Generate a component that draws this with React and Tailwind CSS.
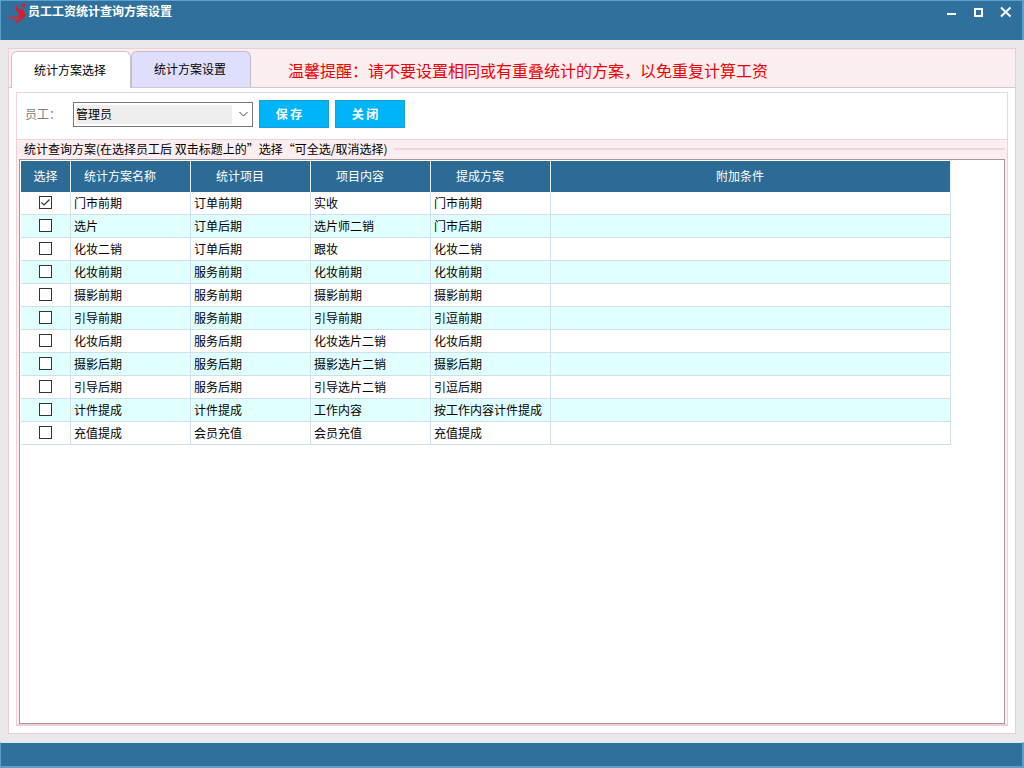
import { useState } from "react";

const EMPLOYEES = ["管理员"];

const PLANS = [
  { name: "门市前期", item: "订单前期", content: "实收", commission: "门市前期" },
  { name: "选片", item: "订单后期", content: "选片师二销", commission: "门市后期" },
  { name: "化妆二销", item: "订单后期", content: "跟妆", commission: "化妆二销" },
  { name: "化妆前期", item: "服务前期", content: "化妆前期", commission: "化妆前期" },
  { name: "摄影前期", item: "服务前期", content: "摄影前期", commission: "摄影前期" },
  { name: "引导前期", item: "服务前期", content: "引导前期", commission: "引逗前期" },
  { name: "化妆后期", item: "服务后期", content: "化妆选片二销", commission: "化妆后期" },
  { name: "摄影后期", item: "服务后期", content: "摄影选片二销", commission: "摄影后期" },
  { name: "引导后期", item: "服务后期", content: "引导选片二销", commission: "引逗后期" },
  { name: "计件提成", item: "计件提成", content: "工作内容", commission: "按工作内容计件提成" },
  { name: "充值提成", item: "会员充值", content: "会员充值", commission: "充值提成" },
];

const HEADERS = ["统计方案名称", "统计项目", "项目内容", "提成方案", "附加条件"];

const Logo = () => (
  <svg width="24" height="24" viewBox="0 0 24 24" fill="none" aria-hidden="true">
    <circle cx="19.5" cy="4.5" r="1.900" fill="#d5202c" />
    <path
      d="M12.500 5.500c-.3 2.500 1 4 3.500 4.500 3 .6 5 1.500 4.500 4-.4 2.200-3.500 4-8.500 7.500"
      stroke="#d5202c"
      strokeWidth="2"
      strokeLinecap="round"
    />
    <path d="M14 9l4-1.500 1.500 3 .5 5.500-4 1-1.500-3z" fill="#d5202c" />
    <path d="M1.500 15.500l6 .2 7.500-.7 2 2-3 2-7-1z" fill="#a83c50" />
  </svg>
);

const WindowButtons = () => (
  <div className="flex items-start gap-3 pt-1 pr-2 text-white">
    <button type="button" aria-label="最小化" className="h-4 w-4">
      <svg width="16" height="16" viewBox="0 0 16 16">
        <path d="M5 9h9" stroke="currentColor" strokeWidth="2" />
      </svg>
    </button>
    <button type="button" aria-label="最大化" className="h-4 w-4">
      <svg width="16" height="16" viewBox="0 0 16 16" fill="none">
        <path d="M5 4h7v7H5z" stroke="currentColor" strokeWidth="2" />
      </svg>
    </button>
    <button type="button" aria-label="关闭窗口" className="h-4 w-4">
      <svg width="16" height="16" viewBox="0 0 16 16">
        <path d="M3 2.500l9.500 9M12.500 2.500l-9.500 9" stroke="currentColor" strokeWidth="2" />
      </svg>
    </button>
  </div>
);

const CheckBox = ({ label, checked, onChange }) => (
  <span className="grid">
    <input
      type="checkbox"
      aria-label={label}
      checked={checked}
      onChange={onChange}
      className="col-start-1 row-start-1 h-[13px] w-[13px] appearance-none border border-[#333333] bg-white"
    />
    {checked && (
      <svg
        className="pointer-events-none col-start-1 row-start-1"
        width="13"
        height="13"
        viewBox="0 0 13 13"
        fill="none"
      >
        <path d="M2.500 6.500l2.500 2.500 5.500-5.500" stroke="#333333" strokeWidth="1.200" />
      </svg>
    )}
  </span>
);

const Tab = ({ active, onClick, children }) => (
  <button
    type="button"
    role="tab"
    aria-selected={active}
    onClick={onClick}
    className={
      active
        ? "h-[37px] w-[120px] rounded-t-md border border-b-0 border-[#c9c3c9] bg-white pr-0.5"
        : "h-9 w-[120px] rounded-t-md border border-b-0 border-[#c0bccb] bg-[#dfdffd] pr-0.5 pb-0.5"
    }
  >
    {children}
  </button>
);

export default function App() {
  const [tab, setTab] = useState(0);
  const [employee, setEmployee] = useState(EMPLOYEES[0]);
  const [selected, setSelected] = useState(PLANS.map((_, i) => i === 0));

  const toggle = (index) =>
    setSelected(selected.map((s, i) => (i === index ? !s : s)));

  // Double click on the header selects everything, or clears it
  const toggleAll = () => {
    const all = selected.every(Boolean);
    setSelected(selected.map(() => !all));
  };

  return (
    <div className="flex min-h-screen flex-col bg-[#e9e9e9] font-['Noto_Sans_CJK_SC','Liberation_Sans',sans-serif] text-xs text-black">
      {/* Title bar */}
      <header className="flex h-10 items-start justify-between border-t border-r-2 border-l border-t-[#5a9fcd] border-r-[#5a9fcd] border-l-[#5a9fcd] bg-[#2f719c]">
        <div className="flex items-start pl-[3px]">
          <Logo />
          <h1 className="pt-0.5 font-bold text-white">员工工资统计查询方案设置</h1>
        </div>
        <WindowButtons />
      </header>

      <main className="flex flex-1 flex-col p-2">
        <div className="flex flex-1 flex-col border border-[#f0cdd2] bg-white">
          {/* Tabs */}
          <div className="flex h-[39px] items-start border-b border-[#d9c5cb] bg-[#fbeef0] pt-0.5 pl-0.5">
            <div role="tablist" className="flex items-start">
              <Tab active={tab === 0} onClick={() => setTab(0)}>
                统计方案选择
              </Tab>
              <Tab active={tab === 1} onClick={() => setTab(1)}>
                统计方案设置
              </Tab>
            </div>
            <p className="self-center pt-0.5 pl-[37px] text-base text-[#ee0000]">
              温馨提醒：请不要设置相同或有重叠统计的方案，以免重复计算工资
            </p>
          </div>

          <div className="flex flex-1 flex-col px-[7px] pt-1 pb-[7px]">
            {/* Employee toolbar */}
            <div className="flex h-12 items-center border border-[#f3d3d7] pb-1 pl-2">
              <label htmlFor="employee" className="w-12 text-[#7d7d7d]">
                员工：
              </label>
              <div className="grid h-[25px] w-[180px] items-center border border-[#767676] bg-white">
                <select
                  id="employee"
                  value={employee}
                  onChange={(e) => setEmployee(e.target.value)}
                  className="col-start-1 row-start-1 h-[23px] w-full appearance-none bg-[#eeeeee] bg-clip-content py-0.5 pr-5 pl-0.5 leading-4 outline-none"
                >
                  {EMPLOYEES.map((name) => (
                    <option key={name}>{name}</option>
                  ))}
                </select>
                <svg
                  className="pointer-events-none col-start-1 row-start-1 mr-1 justify-self-end"
                  width="9"
                  height="6"
                  viewBox="0 0 9 6"
                  fill="none"
                >
                  <path d="M.5 1l4 4 4-4" stroke="#444444" />
                </svg>
              </div>
              <div className="flex gap-1.5 pl-1.5">
                <button
                  type="button"
                  className="h-7 w-[70px] border border-[#1c9ddb] bg-[#00b4f8] pr-2.5 font-bold text-white"
                >
                  保 存
                </button>
                <button
                  type="button"
                  className="h-7 w-[70px] border border-[#1c9ddb] bg-[#00b4f8] pr-2.5 font-bold text-white"
                >
                  关 闭
                </button>
              </div>
            </div>

            {/* Plan list */}
            <section className="flex flex-1 flex-col border-x border-b-2 border-[#efd0d5] bg-[#fbeef0] px-0.5">
              <div className="flex h-[19px] items-center gap-1.5 pb-0.5 pl-[5px]">
                <h2>统计查询方案(在选择员工后 双击标题上的”选择“可全选/取消选择)</h2>
                <div className="h-0.5 flex-1 bg-[#efd8dc]" />
              </div>
              <div className="flex-1 border border-[#a8959b] bg-white pt-px pl-px">
                <table className="w-[930px] table-fixed border-separate border-spacing-0">
                  <colgroup>
                    <col className="w-[50px]" />
                    <col className="w-[120px]" />
                    <col className="w-[120px]" />
                    <col className="w-[120px]" />
                    <col className="w-[120px]" />
                    <col className="w-[400px]" />
                  </colgroup>
                  <thead className="bg-[#2b6b96] text-white">
                    <tr className="h-[31px]">
                      <th
                        onDoubleClick={toggleAll}
                        className="border-r border-[#e4f1f8] px-0 pt-0 pb-0.5 font-normal"
                      >
                        选择
                      </th>
                      {HEADERS.map((title) => (
                        <th
                          key={title}
                          className="border-r border-[#e4f1f8] pt-0 pr-[21px] pb-0.5 pl-0 font-normal"
                        >
                          {title}
                        </th>
                      ))}
                    </tr>
                  </thead>
                  <tbody>
                    {PLANS.map((plan, i) => (
                      <tr key={plan.name} className="h-[23px] bg-white even:bg-[#e0ffff]">
                        <td className="border-r border-b border-[#cfdfee] p-0">
                          <div className="flex h-[22px] items-start justify-center pt-1">
                            <CheckBox
                              label={plan.name}
                              checked={selected[i]}
                              onChange={() => toggle(i)}
                            />
                          </div>
                        </td>
                        <td className="border-r border-b border-[#cfdfee] py-0 pr-0 pl-[3px] leading-[22px]">
                          {plan.name}
                        </td>
                        <td className="border-r border-b border-[#cfdfee] py-0 pr-0 pl-[3px] leading-[22px]">
                          {plan.item}
                        </td>
                        <td className="border-r border-b border-[#cfdfee] py-0 pr-0 pl-[3px] leading-[22px]">
                          {plan.content}
                        </td>
                        <td className="border-r border-b border-[#cfdfee] py-0 pr-0 pl-[3px] leading-[22px]">
                          {plan.commission}
                        </td>
                        <td className="border-r border-b border-[#cfdfee] p-0" />
                      </tr>
                    ))}
                  </tbody>
                </table>
              </div>
            </section>
          </div>
        </div>
      </main>

      {/* Status bar */}
      <footer className="h-[26px] border-t border-r-2 border-b-2 border-l border-t-[#d5e8f4] border-r-[#5a9fcd] border-b-[#5a9fcd] border-l-[#5a9fcd] bg-[#2f719c]" />
    </div>
  );
}
